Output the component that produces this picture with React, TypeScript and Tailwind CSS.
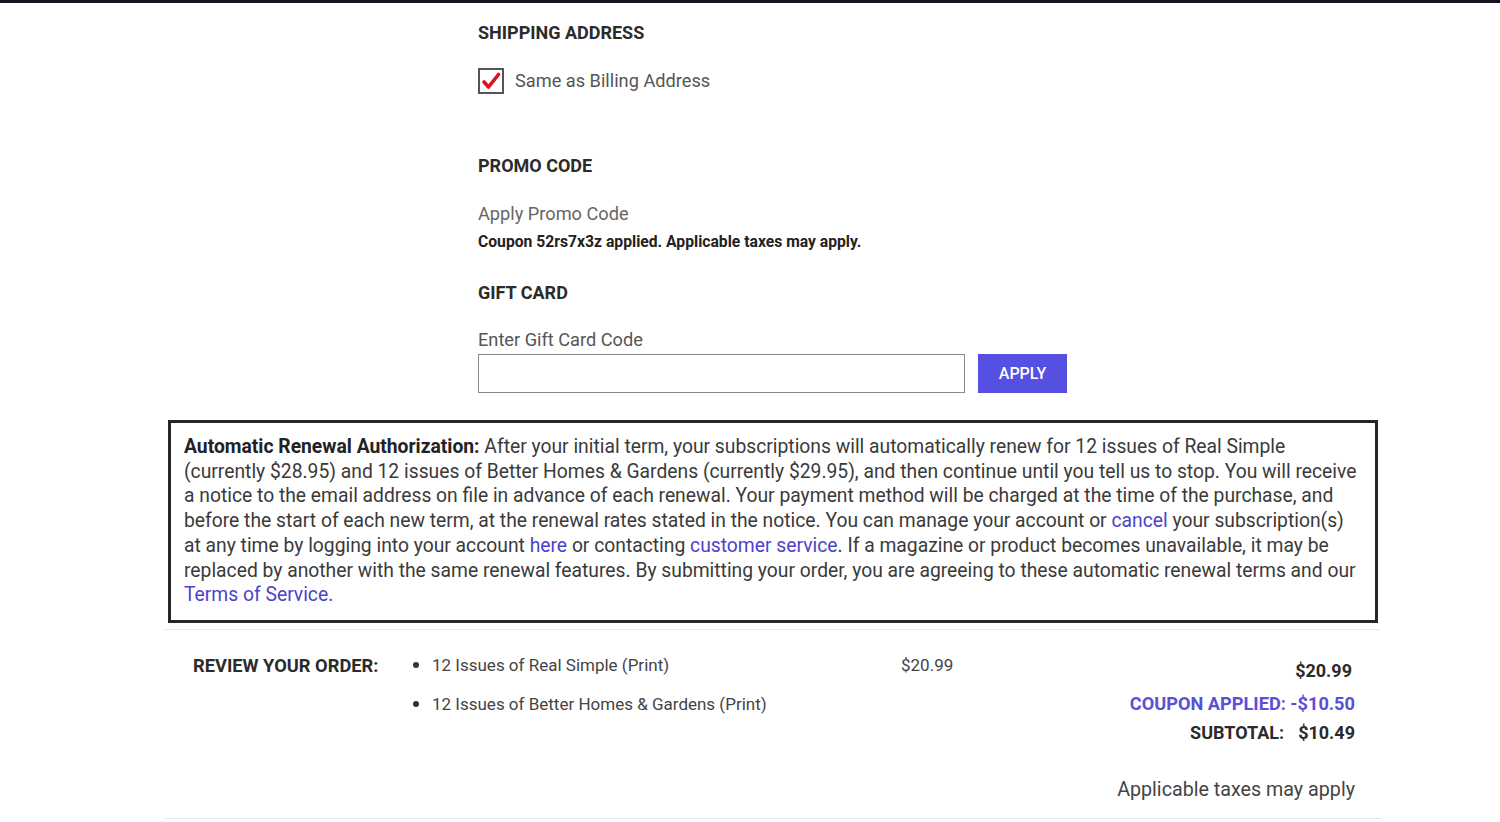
import React from "react";

export default function App() {
  const font = { fontFamily: "Roboto, 'Liberation Sans', sans-serif" };
  return (
    <div className="min-h-[822px] bg-white text-[#333]" style={font}>
      <div className="h-[3px] bg-[#14131f]" />
      {/* upper form */}
      <div className="ml-[478px] flex flex-col">
        <h2 className="mt-[18px] text-[18px] leading-[24px] font-bold text-[#2b2b2b]">SHIPPING ADDRESS</h2>
        <label className="mt-[23px] flex items-center h-[26px]">
          <span className="w-[26px] h-[26px] border-2 border-[#555] bg-white flex items-center justify-center">
            <svg width="22" height="22" viewBox="0 0 22 22">
              <path d="M4 12 L8.5 17 L18.5 4.5" fill="none" stroke="#d9141c" strokeWidth="3.6" strokeLinecap="round" strokeLinejoin="round" />
            </svg>
          </span>
          <span className="ml-[11px] text-[18.2px] leading-[24px] text-[#555]">Same as Billing Address</span>
        </label>

        <h2 className="mt-[60px] text-[18px] leading-[24px] font-bold text-[#2b2b2b]">PROMO CODE</h2>
        <div className="mt-[24px] text-[18.2px] leading-[24px] text-[#666]">Apply Promo Code</div>
        <div className="mt-[6px] text-[15.7px] leading-[20px] font-bold text-[#222]">Coupon 52rs7x3z applied. Applicable taxes may apply.</div>

        <h2 className="mt-[29px] text-[18px] leading-[24px] font-bold text-[#2b2b2b]">GIFT CARD</h2>
        <div className="mt-[23px] text-[18.2px] leading-[24px] text-[#555]">Enter Gift Card Code</div>
        <div className="mt-[2px] flex items-center">
          <input className="w-[487px] h-[39px] border border-[#8a8a8a] outline-none px-2" />
          <button className="ml-[13px] w-[89px] h-[39px] bg-[#5550e2] text-white text-[16px] font-medium">APPLY</button>
        </div>
      </div>

      {/* renewal box */}
      <div className="ml-[168px] mt-[27px] w-[1210px] border-[3px] border-[#262626] pl-[13px] pr-[10px] pt-[12px] pb-[12px]">
        <p className="text-[19.3px] leading-[24.7px] text-[#3a3a3a] whitespace-nowrap">
          <b className="font-bold text-[#222]">Automatic Renewal Authorization:</b> After your initial term, your subscriptions will automatically renew for 12 issues of Real Simple
          <br />
          (currently $28.95) and 12 issues of Better Homes &amp; Gardens (currently $29.95), and then continue until you tell us to stop. You will receive
          <br />
          a notice to the email address on file in advance of each renewal. Your payment method will be charged at the time of the purchase, and
          <br />
          before the start of each new term, at the renewal rates stated in the notice. You can manage your account or <a className="text-[#4b43c8]">cancel</a> your subscription(s)
          <br />
          at any time by logging into your account <a className="text-[#4b43c8]">here</a> or contacting <a className="text-[#4b43c8]">customer service</a>. If a magazine or product becomes unavailable, it may be
          <br />
          replaced by another with the same renewal features. By submitting your order, you are agreeing to these automatic renewal terms and our
          <br />
          <a className="text-[#4b43c8]">Terms of Service.</a>
        </p>
      </div>

      {/* review order */}
      <div className="ml-[165px] mt-[6px] w-[1215px] border-t border-[#e6e6e6] border-b h-[190px]">
        <div className="flex pl-[28px] pr-[25px]">
          <div className="mt-[24px] w-[220px] text-[18.3px] leading-[24px] font-bold text-[#2b2b2b]">REVIEW YOUR ORDER:</div>
          <div className="mt-[23px] w-[488px] flex flex-col gap-[15px]">
            {["12 Issues of Real Simple (Print)", "12 Issues of Better Homes & Gardens (Print)"].map((t) => (
              <div key={t} className="flex items-center h-[24px]">
                <span className="w-[6px] h-[6px] rounded-full bg-[#333] mt-[1px]" />
                <span className="ml-[13px] text-[17px] leading-[24px] text-[#444]">{t}</span>
              </div>
            ))}
          </div>
          <div className="mt-[23px] text-[17px] leading-[24px] text-[#444]">$20.99</div>
          <div className="flex-1 flex flex-col items-end">
            <div className="mt-[29px] mr-[3px] text-[18px] leading-[24px] font-bold text-[#2b2b2b]">$20.99</div>
            <div className="mt-[9px] text-[18.2px] leading-[24px] font-bold text-[#5a50d8]">COUPON APPLIED: -$10.50</div>
            <div className="mt-[5px] text-[18px] leading-[24px] font-bold text-[#2b2b2b] flex gap-[14px]">
              <span>SUBTOTAL:</span>
              <span>$10.49</span>
            </div>
            <div className="mt-[31px] text-[19.7px] leading-[28px] text-[#444]">Applicable taxes may apply</div>
          </div>
        </div>
      </div>
    </div>
  );
}
